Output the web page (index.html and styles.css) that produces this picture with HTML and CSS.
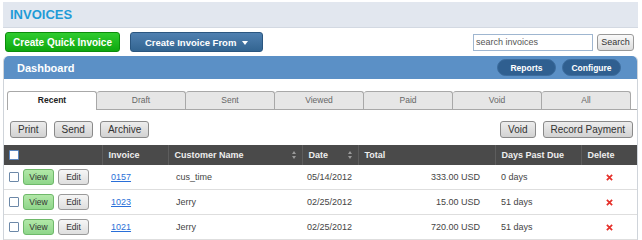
FILE: index.html
```html
<!DOCTYPE html>
<html lang="en">
<head>
    <meta charset="UTF-8">
    <title>Invoices</title>
    <link rel="stylesheet" href="styles.css">
</head>
<body>
    <div class="page">
        <div class="title-bar"><h1>INVOICES</h1></div>

        <div class="toolbar">
            <button class="btn-green">Create Quick Invoice</button>
            <button class="btn-blue">Create Invoice From <span class="caret"></span></button>
            <div class="search">
                <input type="text" value="search invoices">
                <button class="btn-search">Search</button>
            </div>
        </div>

        <div class="panel">
            <div class="panel-head">
                <span class="panel-title">Dashboard</span>
                <div class="pills">
                    <button class="pill">Reports</button>
                    <button class="pill">Configure</button>
                </div>
            </div>

            <div class="tabs">
                <div class="tab active">Recent</div>
                <div class="tab">Draft</div>
                <div class="tab">Sent</div>
                <div class="tab">Viewed</div>
                <div class="tab">Paid</div>
                <div class="tab">Void</div>
                <div class="tab">All</div>
            </div>

            <div class="actions">
                <div class="group">
                    <button class="act">Print</button>
                    <button class="act">Send</button>
                    <button class="act">Archive</button>
                </div>
                <div class="group">
                    <button class="act">Void</button>
                    <button class="act">Record Payment</button>
                </div>
            </div>

            <table class="grid">
                <colgroup>
                    <col style="width:98px">
                    <col style="width:66px">
                    <col style="width:134px">
                    <col style="width:56px">
                    <col style="width:137px">
                    <col style="width:86px">
                    <col>
                </colgroup>
                <thead>
                    <tr>
                        <th class="sel"><span class="check head"></span></th>
                        <th>Invoice</th>
                        <th class="sortable">Customer Name <span class="sort"></span></th>
                        <th class="sortable">Date <span class="sort"></span></th>
                        <th>Total</th>
                        <th>Days Past Due</th>
                        <th>Delete</th>
                    </tr>
                </thead>
                <tbody>
                    <tr>
                        <td class="sel"><span class="check"></span><button class="btn-view">View</button><button class="btn-edit">Edit</button></td>
                        <td class="inv"><a href="#">0157</a></td>
                        <td class="cust">cus_time</td>
                        <td class="date">05/14/2012</td>
                        <td class="total">333.00 USD</td>
                        <td class="days">0 days</td>
                        <td class="del"><svg class="x-icon" viewBox="0 0 8 8"><path d="M1 1L7 7M7 1L1 7"/></svg></td>
                    </tr>
                    <tr>
                        <td class="sel"><span class="check"></span><button class="btn-view">View</button><button class="btn-edit">Edit</button></td>
                        <td class="inv"><a href="#">1023</a></td>
                        <td class="cust">Jerry</td>
                        <td class="date">02/25/2012</td>
                        <td class="total">15.00 USD</td>
                        <td class="days">51 days</td>
                        <td class="del"><svg class="x-icon" viewBox="0 0 8 8"><path d="M1 1L7 7M7 1L1 7"/></svg></td>
                    </tr>
                    <tr>
                        <td class="sel"><span class="check"></span><button class="btn-view">View</button><button class="btn-edit">Edit</button></td>
                        <td class="inv"><a href="#">1021</a></td>
                        <td class="cust">Jerry</td>
                        <td class="date">02/25/2012</td>
                        <td class="total">720.00 USD</td>
                        <td class="days">51 days</td>
                        <td class="del"><svg class="x-icon" viewBox="0 0 8 8"><path d="M1 1L7 7M7 1L1 7"/></svg></td>
                    </tr>
                </tbody>
            </table>
        </div>
    </div>
</body>
</html>
```

FILE: styles.css
```css
body {
    margin: 0;
    background: #fff;
    font-family: "Liberation Sans", Arial, sans-serif;
    color: #333;
}
.page {
    padding: 2px 4px 0 3px;
}
button {
    font-family: "Liberation Sans", Arial, sans-serif;
    cursor: pointer;
    padding: 0;
}
.title-bar {
    background: #e2e7ef;
    border-bottom: 1px solid #d3d9e2;
    height: 25px;
    display: flex;
    align-items: center;
    padding-left: 7px;
}
.title-bar h1 {
    margin: 0;
    font-size: 13px;
    font-weight: bold;
    color: #1e9bd7;
}
.toolbar {
    display: flex;
    align-items: center;
    height: 20px;
    margin: 4px 0 4px 2px;
}
.btn-green {
    width: 115px;
    height: 20px;
    background: linear-gradient(#2fcc2f, #0ea70e);
    border: 1px solid #0b8c0b;
    border-radius: 3px;
    color: #fff;
    font-weight: bold;
    font-size: 10px;
}
.btn-blue {
    width: 133px;
    height: 20px;
    margin-left: 10px;
    background: linear-gradient(#4f80b0, #336591);
    border: 1px solid #2a5680;
    border-radius: 3px;
    color: #fff;
    font-weight: bold;
    font-size: 9.5px;
}
.caret {
    display: inline-block;
    width: 0;
    height: 0;
    border-left: 3px solid transparent;
    border-right: 3px solid transparent;
    border-top: 4px solid #fff;
    margin-left: 3px;
    vertical-align: middle;
}
.search {
    margin-left: auto;
    display: flex;
    align-items: center;
    gap: 4px;
    padding-right: 4px;
}
.search input {
    box-sizing: border-box;
    width: 120px;
    height: 17px;
    padding: 1px 2px;
    border: 1px solid #9fb6d0;
    font-family: "Liberation Sans", Arial, sans-serif;
    font-size: 9px;
    color: #555;
}
.btn-search {
    width: 37px;
    height: 17px;
    background: linear-gradient(#fafafa, #dcdcdc);
    border: 1px solid #999;
    border-radius: 3px;
    font-size: 9px;
    color: #333;
}
.panel {
    border: 1px solid #cfd4da;
    border-top: none;
    border-radius: 5px 5px 0 0;
}
.panel-head {
    background: #5b90c6;
    height: 23px;
    border-radius: 5px 5px 0 0;
    display: flex;
    align-items: center;
    padding: 0 16px 0 13px;
}
.panel-title {
    color: #fff;
    font-weight: bold;
    font-size: 11px;
}
.pills {
    margin-left: auto;
    display: flex;
    gap: 6px;
}
.pill {
    height: 17px;
    width: 59px;
    background: #2f5f90;
    border: 1px solid #3c6c9d;
    border-radius: 9px;
    color: #fff;
    font-weight: bold;
    font-size: 8.5px;
}
.tabs {
    display: flex;
    margin: 12px 0 0 3px;
    border-bottom: 1px solid #a8a8a8;
}
.tab {
    width: 88px;
    height: 17px;
    line-height: 17px;
    text-align: center;
    font-size: 8.5px;
    color: #666;
    background: #e6e6e6;
    border: 1px solid #a8a8a8;
    border-left: none;
    border-bottom: none;
    border-radius: 3px 3px 0 0;
    margin-bottom: -1px;
}
.tab:first-child {
    border-left: 1px solid #a8a8a8;
}
.tab.active {
    background: #fff;
    height: 18px;
    color: #222;
    font-weight: bold;
}
.actions {
    display: flex;
    justify-content: space-between;
    padding: 11px 4px 0 6px;
    height: 17px;
}
.group {
    display: flex;
    gap: 7px;
}
.act {
    height: 17px;
    padding: 0 7px;
    background: linear-gradient(#ededed, #d2d2d2);
    border: 1px solid #8a8a8a;
    border-radius: 3px;
    font-size: 10px;
    color: #333;
}
.grid {
    width: 100%;
    margin-top: 7px;
    border-collapse: collapse;
    table-layout: fixed;
    font-size: 9px;
}
.grid th {
    background: #4a4a4a;
    color: #eee;
    text-align: left;
    font-weight: bold;
    height: 20px;
    padding: 0 0 0 6px;
    border-left: 1px solid #5d5d5d;
    font-size: 9px;
}
.grid th:first-child {
    border-left: none;
}
.grid th.sortable {
    position: relative;
}
.sort {
    position: absolute;
    right: 5px;
    top: 6px;
    width: 5px;
    height: 8px;
}
.sort::before,
.sort::after {
    content: "";
    position: absolute;
    left: 0;
    border-left: 2.5px solid transparent;
    border-right: 2.5px solid transparent;
}
.sort::before {
    top: 0;
    border-bottom: 3px solid #9a9a9a;
}
.sort::after {
    bottom: 0;
    border-top: 3px solid #9a9a9a;
}
.grid td {
    height: 24px;
    border-bottom: 1px solid #dedede;
    padding: 0;
    color: #444;
    white-space: nowrap;
}
.grid th.sel,
.grid td.sel {
    padding-left: 5px;
}
.check {
    display: inline-block;
    width: 8px;
    height: 8px;
    border: 1px solid #6c88a8;
    background: #fff;
    vertical-align: middle;
    border-radius: 1px;
}
.check.head {
    border-color: #5a86c0;
}
.btn-view,
.btn-edit {
    height: 16px;
    width: 31px;
    border-radius: 3px;
    font-size: 8.5px;
    vertical-align: middle;
    color: #333;
}
.btn-view {
    margin-left: 4px;
    background: linear-gradient(#b2e8a8, #8fd68a);
    border: 1px solid #6fb86a;
}
.btn-edit {
    margin-left: 4px;
    background: linear-gradient(#f6f6f6, #dedede);
    border: 1px solid #9a9a9a;
}
.inv {
    padding-left: 9px !important;
}
.inv a {
    color: #2a6fd8;
    text-decoration: underline;
}
.cust {
    padding-left: 8px !important;
}
.date {
    padding-left: 5px !important;
}
.total {
    text-align: right;
    padding-right: 15px !important;
}
.days {
    padding-left: 6px !important;
}
.del {
    text-align: center;
}
.x-icon {
    width: 7px;
    height: 7px;
    vertical-align: middle;
    stroke: #e5302a;
    stroke-width: 2;
    fill: none;
}
```
